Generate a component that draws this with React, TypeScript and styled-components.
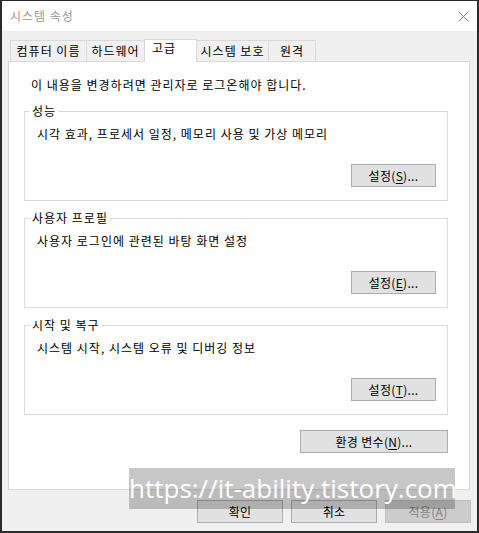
import { FC } from 'react'
import styled, { createGlobalStyle, css } from 'styled-components'

const Global = createGlobalStyle`
  html, body {
    margin: 0;
    padding: 0;
    background: #ffffff;
  }
  * {
    box-sizing: border-box;
  }
`

const Window = styled.div`
  position: relative;
  width: 479px;
  height: 533px;
  display: flex;
  flex-direction: column;
  border-style: solid;
  border-color: #2b2b2b;
  border-width: 1px 2px 2px 2px;
  font-family: "Noto Sans CJK KR", "Noto Sans", sans-serif;
  font-size: 12px;
  line-height: 16px;
  letter-spacing: 1px;
  color: #000;
  overflow: hidden;
`

const TitleBar = styled.div`
  height: 30px;
  background: #fff;
  display: flex;
  align-items: center;
  justify-content: space-between;
  padding-left: 8px;
`

const Title = styled.span`
  color: #999999;
  font-size: 12px;
`

const CloseBox = styled.div`
  width: 28px;
  height: 30px;
  display: flex;
  align-items: center;
  justify-content: center;
`

const Body = styled.div`
  flex: 1;
  background: #f0f0f0;
  display: flex;
  flex-direction: column;
  padding: 8px 7px 0 6px;
`

const TabRow = styled.div`
  height: 22px;
  display: flex;
  align-items: flex-end;
  padding-left: 2px;
  position: relative;
  z-index: 1;
`

const Tab = styled.div<{ $w: number; $active?: boolean }>`
  width: ${p => p.$w}px;
  height: 21px;
  border: 1px solid #d9d9d9;
  border-bottom: none;
  background: #f0f0f0;
  text-align: center;
  padding-top: 2px;
  white-space: nowrap;
  & + & {
    margin-left: -1px;
  }
  ${p => p.$active && css`
    height: 23px;
    margin-bottom: -1px;
    background: #fff;
    text-align: left;
    padding-left: 7px;
    padding-top: 0;
    position: relative;
    z-index: 2;
  `}
`

const Panel = styled.div`
  height: 429px;
  background: #fff;
  border: 1px solid #d9d9d9;
  display: flex;
  flex-direction: column;
  padding: 15px 21px 0 15px;
`

const Intro = styled.div`
  padding-left: 7px;
  margin-bottom: 10px;
`

const Group = styled.fieldset`
  margin: 0 0 9px 0;
  padding: 0 11px 13px 12px;
  border: 1px solid #dcdcdc;
  min-width: 0;
`

const Legend = styled.legend`
  margin-left: -7px;
  padding: 0 2px;
  line-height: 16px;
`

const GroupText = styled.div`
  padding-top: 7px;
`

const ButtonRow = styled.div<{ $top: number }>`
  display: flex;
  justify-content: flex-end;
  margin-top: ${p => p.$top}px;
`

const Button = styled.button<{ $w: number; $disabled?: boolean }>`
  width: ${p => p.$w}px;
  height: 23px;
  padding: 0;
  font: inherit;
  font-size: 12px;
  line-height: 16px;
  letter-spacing: 0.3px;
  color: #000;
  background: #e1e1e1;
  border: 1px solid #adadad;
  border-radius: 0;
  ${p => p.$disabled && css`
    color: #838383;
    background: #cccccc;
    border-color: #bfbfbf;
  `}
`

const Key = styled.u`
  text-underline-offset: 2px;
`

const Footer = styled.div`
  display: flex;
  justify-content: flex-end;
  gap: 8px;
  padding-top: 10px;
  margin-right: -1px;
`

const Watermark = styled.div`
  position: absolute;
  left: 127px;
  top: 467px;
  width: 326px;
  height: 41px;
  background: rgba(0, 0, 0, 0.22);
  color: #fff;
  font-family: "Open Sans", "Noto Sans", sans-serif;
  font-size: 26px;
  line-height: 40px;
  letter-spacing: 0;
  white-space: nowrap;
  text-align: center;
  pointer-events: none;
`

const Label: FC<{ text: string; k: string }> = ({ text, k }) => (
  <>
    {text}(<Key>{k}</Key>)...
  </>
)

const Box: FC<{ title: string; text: string; k: string }> = ({ title, text, k }) => (
  <Group>
    <Legend>{title}</Legend>
    <GroupText>{text}</GroupText>
    <ButtonRow $top={22}>
      <Button $w={85}><Label text="설정" k={k} /></Button>
    </ButtonRow>
  </Group>
)

const tabs: { label: string; w: number; active?: boolean }[] = [
  { label: '컴퓨터 이름', w: 77 },
  { label: '하드웨어', w: 59 },
  { label: '고급', w: 53, active: true },
  { label: '시스템 보호', w: 73 },
  { label: '원격', w: 48 },
]

const App: FC = () => {
  return (
    <>
      <Global />
      <Window>
        <TitleBar>
          <Title>시스템 속성</Title>
          <CloseBox>
            <svg width="11" height="11" viewBox="0 0 11 11">
              <path d="M0.5 0.5 L10.5 10.5 M10.5 0.5 L0.5 10.5" stroke="#8a8a8a" strokeWidth="1" fill="none" />
            </svg>
          </CloseBox>
        </TitleBar>
        <Body>
          <TabRow>
            {tabs.map(t => (
              <Tab key={t.label} $w={t.w} $active={t.active}>{t.label}</Tab>
            ))}
          </TabRow>
          <Panel>
            <Intro>이 내용을 변경하려면 관리자로 로그온해야 합니다.</Intro>
            <Box title="성능" text="시각 효과, 프로세서 일정, 메모리 사용 및 가상 메모리" k="S" />
            <Box title="사용자 프로필" text="사용자 로그인에 관련된 바탕 화면 설정" k="E" />
            <Box title="시작 및 복구" text="시스템 시작, 시스템 오류 및 디버깅 정보" k="T" />
            <ButtonRow $top={6}>
              <Button $w={148}><Label text="환경 변수" k="N" /></Button>
            </ButtonRow>
          </Panel>
          <Footer>
            <Button $w={86}>확인</Button>
            <Button $w={86}>취소</Button>
            <Button $w={86} $disabled>적용(<Key>A</Key>)</Button>
          </Footer>
        </Body>
        <Watermark>https://it-ability.tistory.com</Watermark>
      </Window>
    </>
  )
}

export default App
